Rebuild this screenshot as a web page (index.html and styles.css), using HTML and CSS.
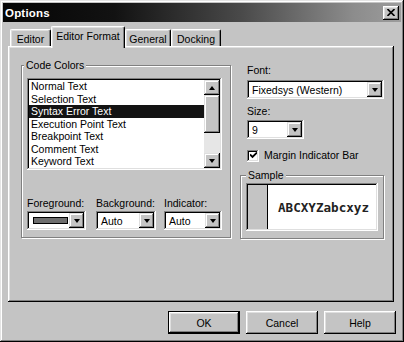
FILE: index.html
```html
<!DOCTYPE html>
<html lang="en">
<head>
  <meta charset="UTF-8">
  <title>Options</title>
  <link rel="stylesheet" href="styles.css">
</head>
<body>

  <div class="window">
    <div class="titlebar">
      <span class="title">Options</span>
      <span class="close">
        <svg width="8" height="7" viewBox="0 0 8 7"><path d="M0.5 0 L7.5 7 M7.5 0 L0.5 7" stroke="#000" stroke-width="1.6" fill="none"/></svg>
      </span>
    </div>

    <div class="body">
      <div class="tabs">
        <div class="tab tab-editor">Editor</div>
        <div class="tab tab-format active">Editor Format</div>
        <div class="tab tab-general">General</div>
        <div class="tab tab-docking">Docking</div>
      </div>

      <div class="panel">
        <fieldset class="group code-colors">
          <legend>Code Colors</legend>
          <div class="listbox">
            <ul class="items">
              <li>Normal Text</li>
              <li>Selection Text</li>
              <li class="selected">Syntax Error Text</li>
              <li>Execution Point Text</li>
              <li>Breakpoint Text</li>
              <li>Comment Text</li>
              <li>Keyword Text</li>
            </ul>
            <div class="scrollbar">
              <div class="sb-btn"><span class="arrow-up"></span></div>
              <div class="sb-thumb"></div>
              <div class="sb-track"></div>
              <div class="sb-btn"><span class="arrow-down"></span></div>
            </div>
          </div>

          <div class="color-row">
            <div class="field fg">
              <div class="label">Foreground:</div>
              <div class="combo"><span class="value"><span class="swatch"></span></span><span class="drop"><span class="arrow-down"></span></span></div>
            </div>
            <div class="field bg">
              <div class="label">Background:</div>
              <div class="combo"><span class="value">Auto</span><span class="drop"><span class="arrow-down"></span></span></div>
            </div>
            <div class="field ind">
              <div class="label">Indicator:</div>
              <div class="combo"><span class="value">Auto</span><span class="drop"><span class="arrow-down"></span></span></div>
            </div>
          </div>
        </fieldset>

        <div class="side">
          <div class="label font-label">Font:</div>
          <div class="combo font-combo"><span class="value">Fixedsys (Western)</span><span class="drop"><span class="arrow-down"></span></span></div>
          <div class="label size-label">Size:</div>
          <div class="combo size-combo"><span class="value">9</span><span class="drop"><span class="arrow-down"></span></span></div>
          <div class="check">
            <span class="box">
              <svg width="7" height="7" viewBox="0 0 7 7"><path d="M0 2.5 L2.5 5 L7 0.5" stroke="#000" stroke-width="1.8" fill="none"/></svg>
            </span>
            <span>Margin Indicator Bar</span>
          </div>
          <fieldset class="group sample">
            <legend>Sample</legend>
            <div class="sample-box">
              <div class="margin"></div>
              <div class="sample-text">ABCXYZabcxyz</div>
            </div>
          </fieldset>
        </div>
      </div>

      <div class="buttons">
        <div class="btn default">OK</div>
        <div class="btn">Cancel</div>
        <div class="btn">Help</div>
      </div>
    </div>
  </div>

</body>
</html>
```

FILE: styles.css
```css
body {
  margin: 0;
  font-family: "Liberation Sans", Arial, sans-serif;
  font-size: 10.5px;
  color: #000;
  background: #c4c4c4;
}

.window {
  width: 404px;
  height: 342px;
  box-sizing: border-box;
  padding: 3px;
  background: #c4c4c4;
  box-shadow: inset -1px -1px #000, inset 1px 1px #e4e4e4, inset -2px -2px #808080, inset 2px 2px #fff;
}

.titlebar {
  height: 19px;
  display: flex;
  align-items: center;
  justify-content: space-between;
  padding: 0 2px 0 2px;
  background: linear-gradient(90deg, #050505 0%, #121212 28%, #4a4a4a 60%, #8c8c8c 88%, #9c9c9c 100%);
}

.title {
  color: #fff;
  font-weight: bold;
  font-size: 11.5px;
  letter-spacing: 0.2px;
}

.close {
  width: 16px;
  height: 14px;
  display: flex;
  align-items: center;
  justify-content: center;
  background: #c4c4c4;
  box-shadow: inset -1px -1px #000, inset 1px 1px #fff, inset -2px -2px #808080, inset 2px 2px #dfdfdf;
}

.body {
  padding: 4px 7px 0 5px;
}

.tabs {
  display: flex;
  align-items: flex-end;
  height: 20px;
  padding-left: 2px;
}

.tab {
  height: 17px;
  box-sizing: border-box;
  border-top: 1px solid #fff;
  border-left: 1px solid #fff;
  border-right: 1px solid #000;
  border-radius: 2px 2px 0 0;
  box-shadow: inset -1px 0 #808080, inset 1px 1px #dfdfdf;
  display: flex;
  align-items: center;
  justify-content: center;
  padding-top: 1px;
}

.tab-editor { width: 41px; }
.tab-format { width: 74px; }
.tab-general { width: 46px; }
.tab-docking { width: 50px; }

.tab.active {
  height: 22px;
  margin-bottom: -2px;
  padding-bottom: 4px;
  position: relative;
  z-index: 1;
  background: #c4c4c4;
}

.panel {
  height: 256px;
  box-sizing: border-box;
  padding: 13px 0 0 13px;
  display: flex;
  box-shadow: inset -1px -1px #000, inset 1px 1px #fff, inset -2px -2px #808080, inset 2px 2px #dfdfdf;
}

.group {
  margin: 0;
  box-sizing: border-box;
  border: 1px solid #808080;
  box-shadow: 1px 1px 0 #fff, inset 1px 1px 0 #fff;
  min-width: 0;
}

.group legend {
  padding: 0 2px;
  line-height: 13px;
  background: #c4c4c4;
  margin-left: -3px;
}

.code-colors {
  width: 210px;
  height: 179px;
  padding: 6px 8px 7px 5px;
}

.listbox {
  height: 92px;
  box-sizing: border-box;
  padding: 2px;
  display: flex;
  background: #fff;
  box-shadow: inset -1px -1px #fff, inset 1px 1px #808080, inset -2px -2px #dfdfdf, inset 2px 2px #000;
}

.items {
  flex: 1;
  margin: 0;
  padding: 0;
  list-style: none;
  overflow: hidden;
}

.items li {
  height: 12.5px;
  line-height: 12.5px;
  padding-left: 2px;
  white-space: nowrap;
}

.items li.selected {
  background: #131313;
  color: #fff;
}

.scrollbar {
  width: 16px;
  display: flex;
  flex-direction: column;
}

.sb-btn, .sb-thumb {
  background: #c4c4c4;
  box-shadow: inset -1px -1px #000, inset 1px 1px #dfdfdf, inset -2px -2px #808080, inset 2px 2px #fff;
}

.sb-btn {
  height: 15px;
  display: flex;
  align-items: center;
  justify-content: center;
}

.sb-thumb {
  height: 38px;
}

.sb-track {
  flex: 1;
  background: #e6e6e6;
}

.arrow-up, .arrow-down {
  width: 0;
  height: 0;
  border-left: 3.5px solid transparent;
  border-right: 3.5px solid transparent;
}

.arrow-up {
  border-bottom: 4px solid #000;
}

.arrow-down {
  border-top: 4px solid #000;
}

.color-row {
  display: flex;
  gap: 10px;
  margin-top: 27px;
}

.fg { width: 59px; }
.bg { width: 60px; margin-right: -2px; }
.ind { width: 58px; }

.label {
  line-height: 13px;
  white-space: nowrap;
}

.combo {
  height: 19px;
  box-sizing: border-box;
  padding: 2px;
  display: flex;
  background: #fff;
  box-shadow: inset -1px -1px #fff, inset 1px 1px #808080, inset -2px -2px #dfdfdf, inset 2px 2px #000;
}

.field .combo {
  margin-top: 1px;
}

.combo .value {
  flex: 1;
  display: flex;
  align-items: center;
  padding-left: 3px;
  white-space: nowrap;
  overflow: hidden;
}

.combo .drop {
  width: 15px;
  display: flex;
  align-items: center;
  justify-content: center;
  background: #c4c4c4;
  box-shadow: inset -1px -1px #000, inset 1px 1px #dfdfdf, inset -2px -2px #808080, inset 2px 2px #fff;
}

.swatch {
  width: 35px;
  height: 7px;
  box-sizing: border-box;
  margin-left: 1px;
  border: 1px solid #000;
  background: #6e6e6e;
}

.side {
  width: 144px;
  margin-left: 9px;
  display: flex;
  flex-direction: column;
}

.font-label {
  margin: 5px 0 0 7px;
}

.font-combo {
  margin: 3px 0 0 7px;
  width: 137px;
}

.size-label {
  margin: 6px 0 0 7px;
}

.size-combo {
  margin: 2px 0 0 7px;
  width: 57px;
}

.check {
  display: flex;
  align-items: center;
  gap: 5px;
  margin: 10px 0 0 7px;
  line-height: 13px;
}

.check .box {
  width: 12px;
  height: 12px;
  box-sizing: border-box;
  display: flex;
  align-items: center;
  justify-content: center;
  background: #fff;
  box-shadow: inset -1px -1px #fff, inset 1px 1px #808080, inset -2px -2px #dfdfdf, inset 2px 2px #000;
}

.sample {
  margin-top: 7px;
  width: 144px;
  height: 70px;
  padding: 1px 5px 6px 5px;
}

.sample legend {
  margin-left: 0;
}

.sample-box {
  height: 48px;
  box-sizing: border-box;
  padding: 2px;
  display: flex;
  background: #fff;
  box-shadow: inset -1px -1px #fff, inset 1px 1px #808080, inset -2px -2px #dfdfdf, inset 2px 2px #000;
}

.margin {
  width: 19px;
  background: #c4c4c4;
  border-right: 1px solid #000;
}

.sample-text {
  display: flex;
  align-items: center;
  padding-left: 10px;
  font-family: "DejaVu Sans Mono", monospace;
  font-weight: bold;
  font-size: 12.6px;
  color: #222;
}

.buttons {
  display: flex;
  justify-content: flex-end;
  gap: 6px;
  margin: 9px -2px 0 0;
}

.btn {
  width: 72px;
  height: 23px;
  box-sizing: border-box;
  display: flex;
  align-items: center;
  justify-content: center;
  box-shadow: inset -1px -1px #000, inset 1px 1px #fff, inset -2px -2px #808080, inset 2px 2px #dfdfdf;
}

.btn.default {
  box-shadow: inset 0 0 0 1px #000, inset -2px -2px #000, inset 2px 2px #fff, inset -3px -3px #808080, inset 3px 3px #dfdfdf;
}
```
